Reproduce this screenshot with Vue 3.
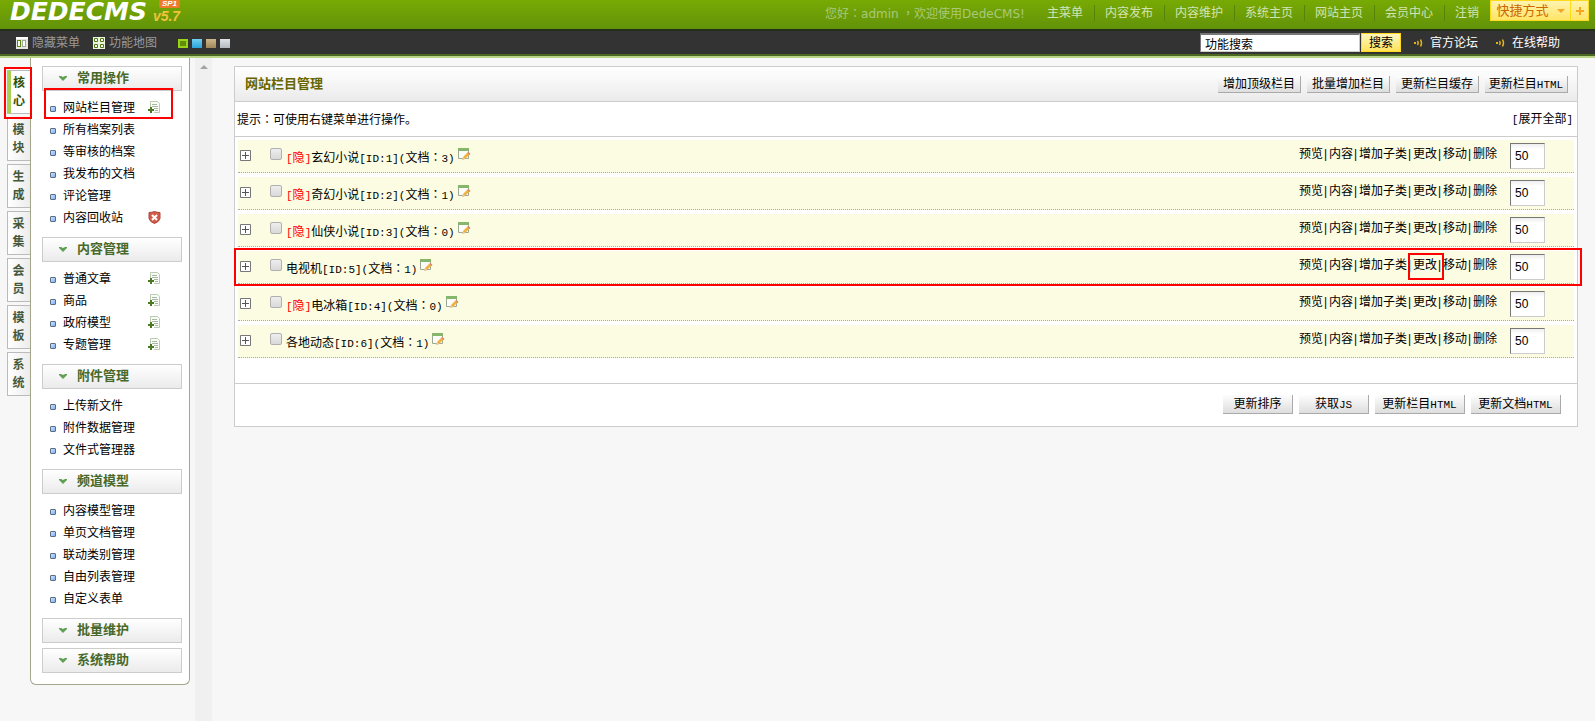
<script setup>
import { ref } from 'vue'

const topNav = ['主菜单', '内容发布', '内容维护', '系统主页', '网站主页', '会员中心', '注销']
const skins = ['green', 'blue', 'brown', 'grey']
const tabs = ['核心', '模块', '生成', '采集', '会员', '模板', '系统']

const menu = [
  {
    title: '常用操作',
    items: [
      { name: '网站栏目管理', icon: 'add', marked: true },
      { name: '所有档案列表' },
      { name: '等审核的档案' },
      { name: '我发布的文档' },
      { name: '评论管理' },
      { name: '内容回收站', icon: 'trash' }
    ]
  },
  {
    title: '内容管理',
    items: [
      { name: '普通文章', icon: 'add' },
      { name: '商品', icon: 'add' },
      { name: '政府模型', icon: 'add' },
      { name: '专题管理', icon: 'add' }
    ]
  },
  { title: '附件管理', items: [{ name: '上传新文件' }, { name: '附件数据管理' }, { name: '文件式管理器' }] },
  {
    title: '频道模型',
    items: [
      { name: '内容模型管理' },
      { name: '单页文档管理' },
      { name: '联动类别管理' },
      { name: '自由列表管理' },
      { name: '自定义表单' }
    ]
  },
  { title: '批量维护', items: [] },
  { title: '系统帮助', items: [] }
]

const rows = ref([
  { id: 1, name: '玄幻小说', docs: 3, hidden: true, sort: 50, checked: false },
  { id: 2, name: '奇幻小说', docs: 1, hidden: true, sort: 50, checked: false },
  { id: 3, name: '仙侠小说', docs: 0, hidden: true, sort: 50, checked: false },
  { id: 5, name: '电视机', docs: 1, hidden: false, sort: 50, checked: false, marked: true },
  { id: 4, name: '电冰箱', docs: 0, hidden: true, sort: 50, checked: false },
  { id: 6, name: '各地动态', docs: 1, hidden: false, sort: 50, checked: false }
])
const actions = ['预览', '内容', '增加子类', '更改', '移动', '删除']
const keyword = ref('功能搜索')
const activeTab = ref('核心')
</script>

<template>
  <div class="page">
    <header class="top">
      <a href="#" class="logo">
        <span class="logo-name">DEDECMS</span>
        <span class="logo-version">v5.7<span class="logo-badge">SP1</span></span>
      </a>
      <p class="welcome">您好<span class="colon">：</span><span class="user">admin</span> <span class="colon">，</span>欢迎使用<span class="user">DedeCMS!</span></p>
      <nav class="top-nav">
        <a v-for="item in topNav" :key="item" href="#">{{ item }}</a>
      </nav>
      <div class="shortcut">
        <button type="button" class="shortcut-main">
          快捷方式
          <svg width="8" height="4" viewBox="0 0 8 4"><path d="M0 0h8L4 4z" fill="#f5a623" /></svg>
        </button>
        <button type="button" class="shortcut-add" aria-label="添加">
          <svg width="8" height="8" viewBox="0 0 8 8"><path d="M3 0h2v3h3v2H5v3H3V5H0V3h3z" fill="#f5a623" /></svg>
        </button>
      </div>
    </header>

    <div class="toolbar">
      <a href="#" class="tool">
        <svg width="12" height="12" viewBox="0 0 12 12">
          <rect width="12" height="12" fill="#e6e6e0" />
          <path d="M0 0h12v2H0z" fill="#fff" />
          <rect x="1.5" y="3.5" width="3" height="6" fill="#fff" stroke="#5a8c14" />
          <rect x="6.5" y="3.5" width="3" height="6" fill="#fff" stroke="#a0a898" />
        </svg>
        隐藏菜单
      </a>
      <a href="#" class="tool">
        <svg width="12" height="12" viewBox="0 0 12 12">
          <rect width="12" height="12" fill="#eef5dc" />
          <path d="M1.500 1.500h3v3h-3zM7.500 1.500h3v3h-3zM1.500 7.500h3v3h-3zM7.500 7.500h3v3h-3z" fill="#fff" stroke="#4c7a10" />
        </svg>
        功能地图
      </a>
      <div class="skins">
        <button v-for="skin in skins" :key="skin" type="button" class="skin" :class="skin" :aria-label="skin"></button>
      </div>
      <form class="search" @submit.prevent>
        <input v-model="keyword" type="text" aria-label="功能搜索" />
        <button type="submit">搜索</button>
      </form>
      <a v-for="link in ['官方论坛', '在线帮助']" :key="link" href="#" class="help">
        <svg width="10" height="10" viewBox="0 0 10 10" fill="none" stroke="#e0b41c">
          <path d="M1 4v2" stroke-width="2" />
          <path d="M3.500 3q1.500 2 0 4M6.500 1.500q2 3.500 0 7" stroke-width="1.500" />
        </svg>
        {{ link }}
      </a>
    </div>

    <div class="body">
      <nav class="tabs">
        <button
          v-for="tab in tabs"
          :key="tab"
          type="button"
          class="tab"
          :class="{ active: tab === activeTab }"
          @click="activeTab = tab"
        >
          {{ tab }}
        </button>
      </nav>

      <aside class="menu">
        <section v-for="group in menu" :key="group.title" class="group">
          <h2>
            <svg width="8" height="5" viewBox="0 0 8 5"><path d="M0 0h2l2 1 2-1h2v1L4 5 0 1z" fill="#5fa055" /></svg>
            {{ group.title }}
          </h2>
          <ul v-if="group.items.length">
            <li v-for="item in group.items" :key="item.name" :class="{ marked: item.marked }">
              <i class="bullet"></i>
              <a href="#">{{ item.name }}</a>
              <svg v-if="item.icon === 'add'" class="item-icon" width="13" height="13" viewBox="0 0 13 13">
                <path d="M2.500 6V.5h7l2 2v9H6" fill="#fafcf8" stroke="#b9cbb2" />
                <path d="M4 3.500h5M4 5.500h6M6 7.500h4M7 9.500h3" stroke="#a9b8a4" />
                <path d="M2 6h2v2h2v2H4v2H2v-2H0V8h2z" fill="#4c7a22" />
              </svg>
              <svg v-if="item.icon === 'trash'" class="item-icon" width="13" height="13" viewBox="0 0 13 13">
                <path d="M1 1.500q3 0 5.500-1 2.500 1 5.500 1v6q-1 3.500-5.500 5Q2 11 1 7.500z" fill="#d65a48" stroke="#a8483c" />
                <path d="M4 4l5 5M9 4L4 9" stroke="#fff" stroke-width="2" />
              </svg>
            </li>
          </ul>
        </section>
      </aside>

      <div class="splitter">
        <svg width="8" height="4" viewBox="0 0 8 4"><path d="M0 4l4-4 4 4z" fill="#a3a3a3" /></svg>
      </div>

      <main class="panel">
        <div class="panel-head">
          <h1>网站栏目管理</h1>
          <div class="buttons">
            <button type="button">增加顶级栏目</button>
            <button type="button">批量增加栏目</button>
            <button type="button">更新栏目缓存</button>
            <button type="button">更新栏目<span class="mono">HTML</span></button>
          </div>
        </div>
        <div class="tip">
          <span>提示<span class="colon">：</span>可使用右键菜单进行操作。</span>
          <a href="#"><span class="mono">[</span>展开全部<span class="mono">]</span></a>
        </div>

        <div class="rows">
          <div v-for="row in rows" :key="row.id" class="row" :class="{ marked: row.marked }">
            <button type="button" class="expand" aria-label="展开">
              <svg width="11" height="11" viewBox="0 0 11 11">
                <path d="M.5.5h10v10H.5z" fill="#fff" stroke="#777" />
                <path d="M2 5.500h7M5.500 2v7" stroke="#555" />
              </svg>
            </button>
            <input :id="'cat' + row.id" v-model="row.checked" type="checkbox" class="check" />
            <label :for="'cat' + row.id" class="name">
              <span v-if="row.hidden" class="hidden-flag"><span class="mono">[</span>隐<span class="mono">]</span></span>{{ row.name }}<span class="mono">[ID:{{ row.id }}](</span>文档<span class="colon">：</span><span class="mono">{{ row.docs }})</span>
            </label>
            <svg class="edit" width="13" height="13" viewBox="0 0 13 13">
              <path d="M.5.5h10v10H.5z" fill="#fdfdf8" stroke="#9aa897" />
              <path d="M0 0h11v3H0z" fill="#86b56c" />
              <path d="M4 12l1-3 5-5 2 2-5 5z" fill="#f2b13c" />
              <path d="M4 12l1-3 2 2z" fill="#d8cfc0" />
              <path d="M9.500 5l1-1 2 2-1 1z" fill="#d98275" />
            </svg>
            <div class="actions">
              <a v-for="action in actions" :key="action" href="#" :class="{ boxed: row.marked && action === '更改' }">{{ action }}</a>
            </div>
            <input v-model="row.sort" type="text" class="sort" aria-label="排序" />
          </div>
        </div>

        <div class="panel-foot">
          <button type="button">更新排序</button>
          <button type="button">获取<span class="mono">JS</span></button>
          <button type="button" class="wide">更新栏目<span class="mono">HTML</span></button>
          <button type="button" class="wide">更新文档<span class="mono">HTML</span></button>
        </div>
      </main>
    </div>
  </div>
</template>

<style>
body {
  background: #f7f7f7;
}
</style>

<style scoped>
.page {
  min-height: 100vh;
  display: flex;
  flex-direction: column;
  color: #000;
  font: 12px/18px "Liberation Sans", "Noto Sans CJK SC", sans-serif;
}

.page *,
.page *::after {
  box-sizing: border-box;
}

h1,
h2,
p,
ul {
  margin: 0;
  padding: 0;
  font-size: 12px;
}

p {
  font-weight: normal;
}

ul {
  list-style: none;
}

a {
  color: inherit;
  text-decoration: none;
}

svg {
  display: block;
  flex: none;
}

button,
input {
  margin: 0;
  padding: 0;
  font: inherit;
  color: inherit;
}

.mono {
  font-family: "Liberation Mono", monospace;
  font-size: 11px;
}

/* centred full-width punctuation */
.colon {
  font-family: "Noto Sans CJK TC", sans-serif;
}

/* header */
.top {
  display: flex;
  height: 29px;
  padding-right: 6px;
  background: linear-gradient(#78aa04, #629209);
}

.logo {
  display: flex;
  padding-left: 10px;
  margin-right: auto;
  font-family: "DejaVu Sans", sans-serif;
  font-weight: bold;
  font-style: italic;
}

.logo-name {
  color: #fff;
  font-size: 25px;
  line-height: 24px;
}

.logo-version {
  position: relative;
  margin-left: 6px;
  color: #efc43a;
  font-family: "Liberation Sans", sans-serif;
  font-size: 14px;
  line-height: 33px;
}

.logo-badge {
  position: absolute;
  top: 0;
  left: 6px;
  padding: 0 3px;
  border-radius: 0 0 2px 2px;
  background: #ee7a2b;
  color: #fff;
  font-size: 8px;
  line-height: 8px;
}

.welcome {
  margin-right: 22px;
  color: #a9c97a;
  line-height: 26px;
}

.user {
  font-family: "DejaVu Sans", sans-serif;
}

.top-nav {
  display: flex;
  align-items: flex-start;
  padding-top: 5px;
}

.top-nav a {
  padding: 0 11px 0 10px;
  border-left: 1px solid #568408;
  color: #d3e4b4;
  line-height: 16px;
}

.top-nav a:first-child {
  border-left: 0;
  padding-left: 0;
}

.shortcut {
  display: flex;
  height: 21px;
}

.shortcut button {
  display: flex;
  align-items: center;
  justify-content: center;
  border: 1px solid #ffd91c;
  background: linear-gradient(#fff3b0, #ffe566);
  color: #cc6600;
}

.shortcut .shortcut-main {
  width: 81px;
  gap: 8px;
  font-size: 13px;
}

.shortcut .shortcut-add {
  width: 18px;
  border-left: 0;
}

/* toolbar */
.toolbar {
  display: flex;
  align-items: center;
  height: 29px;
  padding: 1px 35px 3px 16px;
  border-top: 2px solid #22301a;
  border-bottom: 2px solid #b9d388;
  box-shadow: inset 0 -2px #4b6820;
  background: #333;
}

.tool {
  display: flex;
  align-items: center;
  gap: 4px;
  margin-right: 13px;
  color: #999;
}

.skins {
  display: flex;
  gap: 4px;
  margin: 2px auto 0 8px;
}

.skin {
  width: 10px;
  height: 9px;
  border: 0;
}

.skin.green {
  border: 2px solid #98d413;
  background: #638b0c;
}

.skin.blue {
  background: linear-gradient(#6fd0f2, #2ba3d8);
}

.skin.brown {
  background: linear-gradient(#cdb78d, #a08659);
}

.skin.grey {
  background: linear-gradient(#dfe3e6, #b4b9bd);
}

.search {
  display: flex;
  align-items: center;
  gap: 1px;
  margin-right: 13px;
}

.search input {
  width: 160px;
  height: 19px;
  padding: 0 4px;
  border: 1px solid #ccc;
  border-top: 2px solid #777;
  border-left-color: #777;
  background: #fff;
  color: #000;
}

.search button {
  width: 40px;
  height: 19px;
  border: 1px solid #ffd91c;
  background: linear-gradient(#fff6c0, #ffe35c);
  line-height: 16px;
}

.help {
  display: flex;
  align-items: center;
  gap: 6px;
  color: #fff;
}

.help + .help {
  margin-left: 18px;
}

/* left side */
.body {
  display: flex;
  align-items: flex-start;
  flex: 1;
}

.tabs {
  display: flex;
  flex-direction: column;
  gap: 3px;
  width: 30px;
  padding: 12px 0 0 7px;
}

.tab {
  height: 44px;
  padding: 0 5px 0 4px;
  border: 1px solid #bbb;
  border-right: 0;
  background: linear-gradient(90deg, #fff, #ececec);
  color: #46583c;
  font-weight: bold;
  line-height: 18px;
}

.tab.active {
  position: relative;
  border-left: 4px solid #a9cf52;
  padding: 0 5px 0 2px;
  background: #fff;
  color: #2f5208;
}

.menu {
  width: 160px;
  padding: 8px 7px 6px 11px;
  border: 1px solid #a5a58c;
  border-top: 0;
  border-radius: 0 0 6px 6px;
  background: #fff;
}

.group {
  margin-bottom: 5px;
}

.group h2 {
  display: flex;
  align-items: center;
  gap: 10px;
  height: 25px;
  padding: 0 0 1px 16px;
  border: 1px solid #ccc;
  background: linear-gradient(#fff, #ebebeb);
  color: #47692b;
  font-size: 13px;
}

.group ul {
  padding: 6px 0 3px;
}

.group li {
  display: flex;
  align-items: center;
  height: 22px;
  padding: 0 21px 0 8px;
}

.bullet {
  width: 6px;
  height: 6px;
  margin: 2px 7px 0 0;
  border: 1px solid #5b6b80;
  border-radius: 1px;
  background: linear-gradient(135deg, #cfe2ff, #7fb0f5);
}

.item-icon {
  margin: 0 0 2px auto;
}

.splitter {
  display: flex;
  justify-content: center;
  align-self: stretch;
  width: 17px;
  margin: 0 22px 0 5px;
  padding-top: 7px;
  background: #f0f0f0;
}

/* red marks */
.tab.active::after,
.group li.marked::after,
.row.marked::after,
.boxed::after {
  content: '';
  position: absolute;
  border: 2px solid #f00;
  pointer-events: none;
}

.tab.active::after {
  inset: -4px -2px -6px -7px;
}

.group li.marked,
.row.marked,
.boxed {
  position: relative;
}

.group li.marked::after {
  inset: -9px 9px 0 2px;
}

.row.marked::after {
  inset: -3px -8px -3px -4px;
}

.boxed::after {
  inset: -3px -7px -6px -5px;
}

/* main panel */
.panel {
  flex: 1;
  margin: 8px 17px 0 0;
  border: 1px solid #ccc;
  background: #fff;
}

.panel-head,
.tip {
  display: flex;
  align-items: center;
  justify-content: space-between;
  height: 35px;
  border-bottom: 1px solid #ccc;
}

.panel-head {
  padding: 0 9px 0 10px;
  background: linear-gradient(#fff, #ebebeb);
}

.panel-head h1 {
  color: #666600;
  font-size: 13px;
}

.tip {
  padding: 0 4px 0 2px;
}

.buttons {
  display: flex;
  gap: 6px;
}

.panel button:not(.expand) {
  width: 83px;
  height: 17px;
  border: 0;
  border-right: 1px solid #aaa;
  border-bottom: 1px solid #aaa;
  background: linear-gradient(#fdfdfd, #dedede);
  line-height: 16px;
  white-space: nowrap;
}

.rows {
  display: flex;
  flex-direction: column;
  gap: 4px;
  padding: 3px 3px 25px;
}

.row {
  display: flex;
  align-items: flex-start;
  height: 33px;
  padding: 3px 29px 0 2px;
  border-bottom: 1px dotted #aaa;
  background: #fcfce2;
}

.expand {
  margin: 7px 19px 0 0;
  border: 0;
  background: none;
}

.check {
  appearance: none;
  width: 12px;
  height: 12px;
  margin: 5px 4px 0 0;
  border: 1px solid #b0b0b0;
  border-radius: 2px;
  background: linear-gradient(#eee, #d9d9d9);
}

.name {
  margin: 5px 3px 0 0;
}

.hidden-flag {
  color: #f00;
}

.edit {
  margin-top: 5px;
}

.actions {
  display: flex;
  margin: 2px 13px 0 auto;
}

.actions a:not(:last-child) {
  margin-right: 6px;
}

.actions a + a::before {
  content: '|';
  position: absolute;
  margin-left: -5px;
}

.sort {
  width: 35px;
  height: 26px;
  padding: 0 4px;
  border: 1px solid #ccc;
  border-top-color: #777;
  border-left-color: #777;
  background: linear-gradient(#eee, #fff 5px);
}

.panel-foot {
  display: flex;
  justify-content: flex-end;
  gap: 6px;
  padding: 11px 16px 12px;
  border-top: 1px solid #ccc;
}

.panel .panel-foot button {
  width: 70px;
  height: 19px;
  line-height: 18px;
}

.panel .panel-foot .wide {
  width: 90px;
}
</style>
